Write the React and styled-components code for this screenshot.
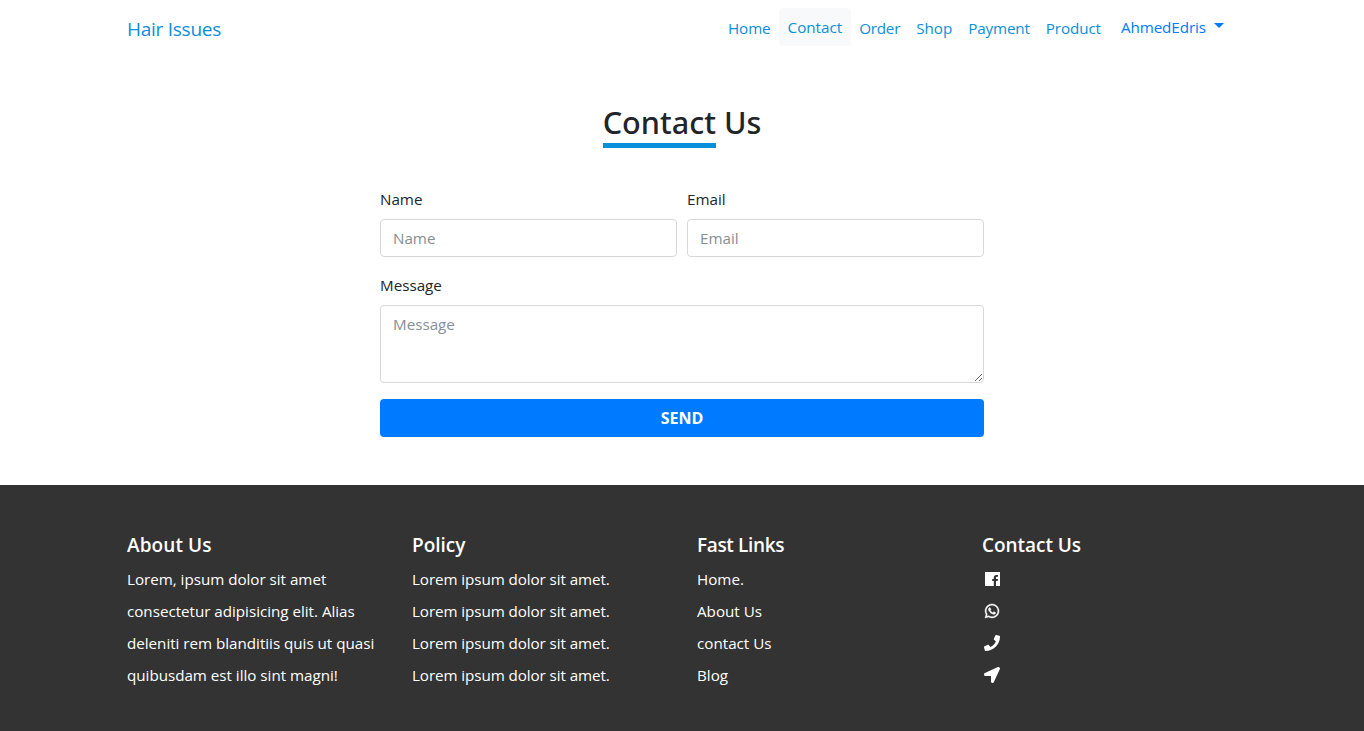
import React from "react";
import styled, { createGlobalStyle } from "styled-components";
import { FaWhatsapp, FaPhone, FaLocationArrow } from "react-icons/fa";

const GlobalStyle = createGlobalStyle`
  *, *::before, *::after { box-sizing: border-box; }
  body {
    margin: 0;
    background: #fff;
    color: #212529;
    font-family: "Segoe UI", "Open Sans", "Noto Sans", sans-serif;
    font-size: 15.2px;
    line-height: 24px;
  }
  #root { display: flex; flex-direction: column; min-height: 100vh; }
`;

const Container = styled.div`
  width: 1140px;
  margin: 0 auto;
  padding: 0 15px;
`;

const NavBar = styled(Container)`
  display: flex;
  align-items: center;
  justify-content: space-between;
  height: 54px;
  padding-top: 2px;
`;

const Brand = styled.a`
  padding-top: 2px;
  color: #0a90db;
  font-size: 19px;
  letter-spacing: -0.26px;
  line-height: 30px;
`;

const NavList = styled.ul`
  display: flex;
  align-items: center;
  margin: 0;
  padding: 0;
  list-style: none;
`;

const NavLink = styled.a`
  display: block;
  padding: 8px;
  color: #0a90db;
  letter-spacing: ${(p) => p.$spacing || 0}px;
`;

const ActiveLink = styled(NavLink)`
  height: 38px;
  margin-top: -2px;
  padding: 6px 8px;
  border: 1px solid #f8f9fa;
  border-radius: 4px;
  background: #f8f9fa;
`;

const UserMenu = styled.button`
  display: flex;
  align-items: center;
  gap: 8px;
  height: 38px;
  margin: -2px 0 0 -1px;
  padding: 0 12px;
  border: 1px solid transparent;
  background: transparent;
  color: #007bff;
  font: inherit;
  letter-spacing: -0.07px;
`;

const Caret = styled.span`
  margin-top: -3px;
  border-top: 5px solid #007bff;
  border-left: 5px solid transparent;
  border-right: 5px solid transparent;
`;

const Main = styled.main`
  padding: 48px 0;
  height: 431px;
`;

const Title = styled.h2`
  margin: 0 0 39px;
  text-align: center;
  font-family: "Segoe UI", "Noto Sans", sans-serif;
  font-size: 30.6px;
  font-weight: 500;
  line-height: 41px;
`;

const Underlined = styled.span`
  display: inline-block;
  border-bottom: 5px solid #0a90db;
`;

const Form = styled.form`
  display: flex;
  flex-direction: column;
  gap: 16px;
  width: 604px;
  margin: 0 auto;
`;

const FieldRow = styled.div`
  display: grid;
  grid-template-columns: 1fr 1fr;
  gap: 10px;
`;

const Field = styled.label`
  display: flex;
  flex-direction: column;
  gap: 8px;
`;

const Input = styled.input`
  width: 100%;
  height: 38px;
  padding: 6px 12px;
  border: 1px solid #d6d8da;
  border-radius: 4px;
  background: #fff;
  font: inherit;
  &::placeholder { color: #868e96; opacity: 1; }
`;

const TextArea = styled(Input)`
  display: block;
  height: 78px;
  resize: vertical;
`;

const SendButton = styled.button`
  height: 38px;
  border: 0;
  border-radius: 4px;
  background: #007bff;
  color: #fff;
  font: inherit;
  font-size: 16px;
  font-weight: 700;
`;

const Footer = styled.footer`
  flex: 1;
  background: #333;
  color: #fff;
`;

const FooterGrid = styled(Container)`
  display: grid;
  grid-template-columns: repeat(4, 285px);
  padding-top: 48px;
`;

const FooterHeading = styled.h3`
  margin: 0 0 6px;
  font-size: 19px;
  font-weight: 600;
  line-height: 24px;
  letter-spacing: ${(p) => p.$spacing || 0}px;
`;

const FooterList = styled.ul`
  margin: 0;
  padding: 0;
  list-style: none;
  line-height: 32px;
`;

const FooterItem = styled.li`
  height: 32px;
  white-space: nowrap;
  letter-spacing: ${(p) => p.$spacing || 0}px;
`;

const IconItem = styled(FooterItem)`
  display: flex;
  align-items: center;
  width: 20px;
  justify-content: center;
  font-size: 16px;
`;

const WhatsappIcon = styled(FaWhatsapp)`
  stroke: #fff;
  stroke-width: 14px;
`;

const FacebookIcon = () => (
  <svg width="15" height="14" viewBox="0 0 15 14" fill="#fff">
    <path d="M0 0H15V14H11V9H12.7L13 7H11V5.8C11 5.1 11.4 4.8 12 4.8H13V3H11.4C9.7 3 8.8 4 8.8 5.5V7H7.2V9H8.8V14H0Z" />
  </svg>
);

const LINKS = [
  { label: "Home", spacing: -0.08 },
  { label: "Contact", active: true },
  { label: "Order", spacing: -0.2 },
  { label: "Shop" },
  { label: "Payment", spacing: -0.14 },
  { label: "Product", spacing: -0.1 },
];

const COLUMNS = [
  {
    title: "About Us",
    titleSpacing: 0.1,
    spacing: -0.02,
    items: [
      "Lorem, ipsum dolor sit amet",
      "consectetur adipisicing elit. Alias",
      "deleniti rem blanditiis quis ut quasi",
      "quibusdam est illo sint magni!",
    ],
  },
  { title: "Policy", spacing: -0.08, items: Array(4).fill("Lorem ipsum dolor sit amet.") },
  { title: "Fast Links", titleSpacing: -0.35, items: ["Home.", "About Us", "contact Us", "Blog"] },
  {
    title: "Contact Us",
    titleSpacing: -0.05,
    icons: [FacebookIcon, WhatsappIcon, FaPhone, FaLocationArrow],
  },
];

export default function App() {
  return (
    <>
      <GlobalStyle />
      <NavBar as="nav">
        <Brand>Hair Issues</Brand>
        <NavList>
          {LINKS.map(({ label, active, spacing }) => (
            <li key={label}>
              {active ? <ActiveLink>{label}</ActiveLink> : <NavLink $spacing={spacing}>{label}</NavLink>}
            </li>
          ))}
          <li>
            <UserMenu type="button">
              AhmedEdris
              <Caret />
            </UserMenu>
          </li>
        </NavList>
      </NavBar>
      <Main>
        <Title>
          <Underlined>Contact</Underlined> Us
        </Title>
        <Form>
          <FieldRow>
            <Field>
              Name
              <Input placeholder="Name" />
            </Field>
            <Field>
              Email
              <Input placeholder="Email" />
            </Field>
          </FieldRow>
          <Field>
            Message
            <TextArea as="textarea" placeholder="Message" />
          </Field>
          <SendButton type="button">SEND</SendButton>
        </Form>
      </Main>
      <Footer>
        <FooterGrid>
          {COLUMNS.map(({ title, titleSpacing, spacing, items, icons }) => (
            <section key={title}>
              <FooterHeading $spacing={titleSpacing}>{title}</FooterHeading>
              <FooterList>
                {items?.map((text, i) => (
                  <FooterItem key={i} $spacing={spacing}>{text}</FooterItem>
                ))}
                {icons?.map((Icon, i) => (
                  <IconItem key={i}>
                    <Icon />
                  </IconItem>
                ))}
              </FooterList>
            </section>
          ))}
        </FooterGrid>
      </Footer>
    </>
  );
}
